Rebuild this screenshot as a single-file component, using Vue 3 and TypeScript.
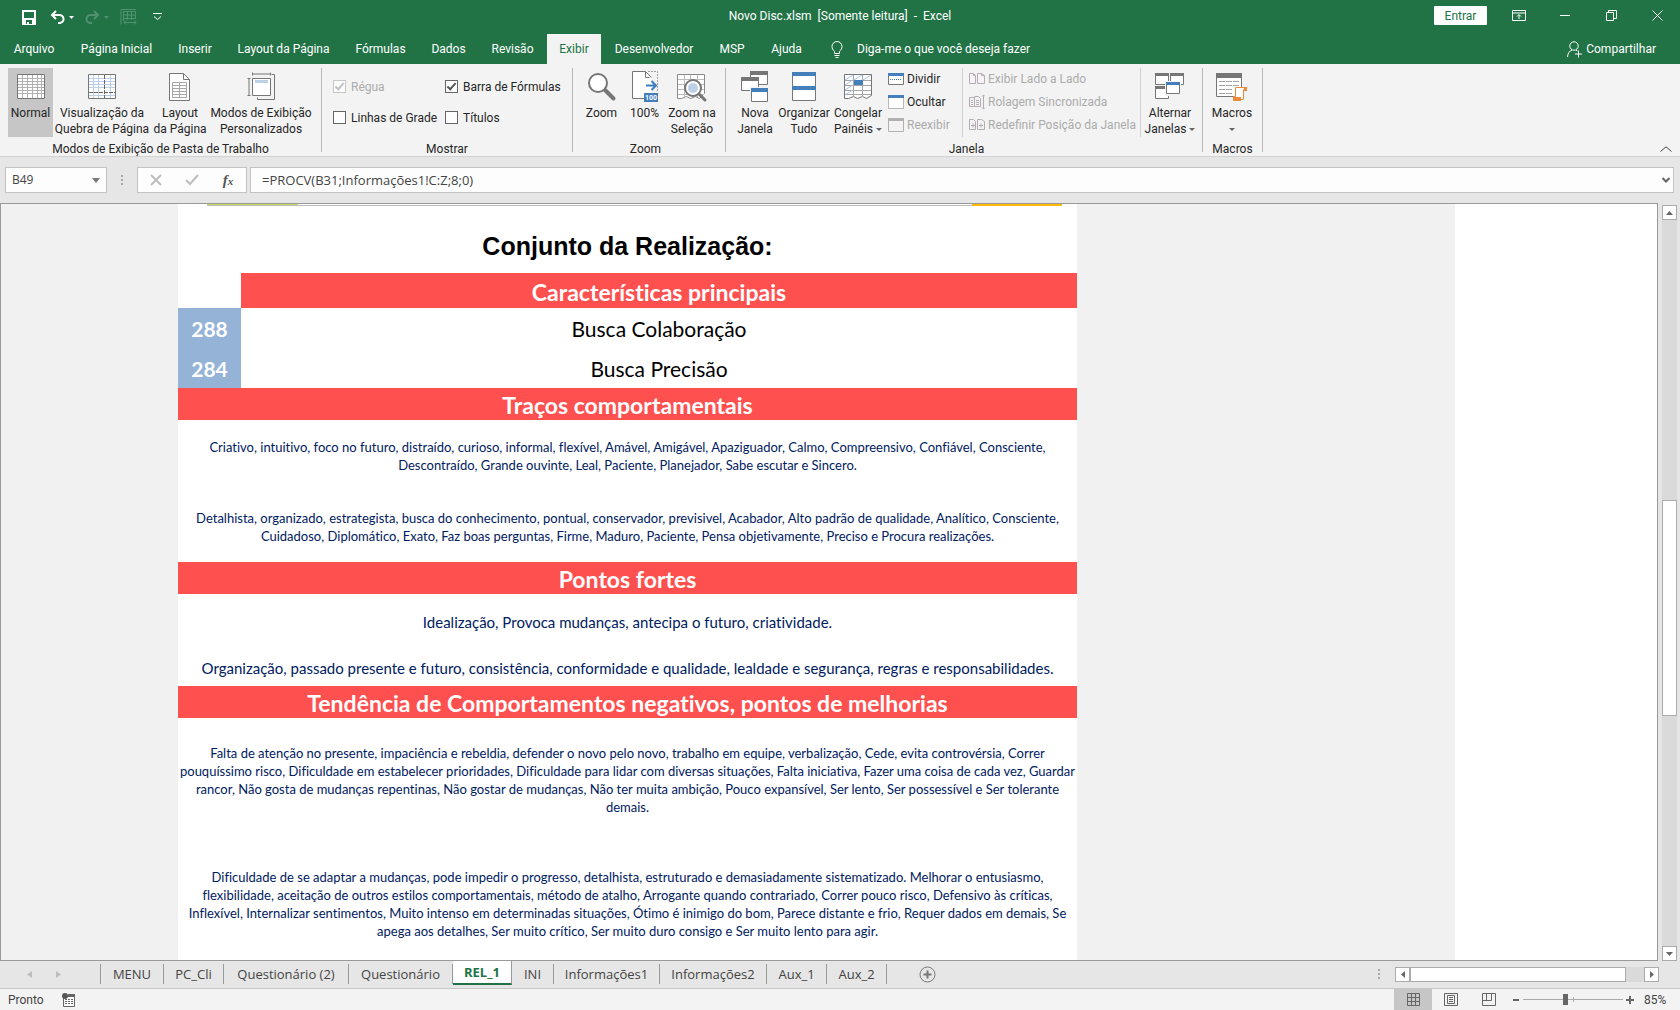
<script setup lang="ts">
import { ref } from 'vue'

interface RibbonTab { label: string; width: number }
interface SheetTab { label: string; width: number }
interface Trait { lines: string[]; size: 'regular' | 'medium'; row: string }

const ribbonTabs: RibbonTab[] = [
  { label: 'Arquivo', width: 68 },
  { label: 'Página Inicial', width: 97 },
  { label: 'Inserir', width: 60 },
  { label: 'Layout da Página', width: 117 },
  { label: 'Fórmulas', width: 77 },
  { label: 'Dados', width: 59 },
  { label: 'Revisão', width: 69 },
  { label: 'Exibir', width: 54 },
  { label: 'Desenvolvedor', width: 106 },
  { label: 'MSP', width: 50 },
  { label: 'Ajuda', width: 59 },
]
const activeTab = ref('Exibir')

const sheetTabs: SheetTab[] = [
  { label: 'MENU', width: 63 },
  { label: 'PC_Cli', width: 60 },
  { label: 'Questionário (2)', width: 125 },
  { label: 'Questionário', width: 104 },
  { label: 'REL_1', width: 59 },
  { label: 'INI', width: 42 },
  { label: 'Informações1', width: 106 },
  { label: 'Informações2', width: 107 },
  { label: 'Aux_1', width: 60 },
  { label: 'Aux_2', width: 60 },
]
const activeSheet = ref('REL_1')

const ruler = ref(true)
const gridLines = ref(false)
const formulaBar = ref(true)
const headings = ref(false)
const cellName = ref('B49')
const formula = ref('=PROCV(B31;Informações1!C:Z;8;0)')
const zoom = ref(42)

const traits: Trait[] = [
  { row: 'h72', size: 'regular', lines: [
    'Criativo, intuitivo, foco no futuro, distraído, curioso, informal, flexível, Amável, Amigável, Apaziguador, Calmo, Compreensivo, Confiável, Consciente,',
    'Descontraído, Grande ouvinte, Leal, Paciente, Planejador, Sabe escutar e Sincero.',
  ] },
  { row: 'h70', size: 'regular', lines: [
    'Detalhista, organizado, estrategista, busca do conhecimento, pontual, conservador, previsivel, Acabador, Alto padrão de qualidade, Analítico, Consciente,',
    'Cuidadoso, Diplomático, Exato, Faz boas perguntas, Firme, Maduro, Paciente, Pensa objetivamente, Preciso e Procura realizações.',
  ] },
]
const strengths: Trait[] = [
  { row: 'h56', size: 'medium', lines: ['Idealização, Provoca mudanças, antecipa o futuro, criatividade.'] },
  { row: 'h36', size: 'medium', lines: ['Organização, passado presente e futuro, consistência, conformidade e qualidade, lealdade e segurança, regras e responsabilidades.'] },
]
const weaknesses: Trait[] = [
  { row: 'h124', size: 'regular', lines: [
    'Falta de atenção no presente, impaciência e rebeldia, defender o novo pelo novo, trabalho em equipe, verbalização, Cede, evita controvérsia, Correr',
    'pouquíssimo risco, Dificuldade em estabelecer prioridades, Dificuldade para lidar com diversas situações, Falta iniciativa, Fazer uma coisa de cada vez, Guardar',
    'rancor, Não gosta de mudanças repentinas, Não gostar de mudanças, Não ter muita ambição, Pouco expansível, Ser lento, Ser possessível e Ser tolerante',
    'demais.',
  ] },
  { row: 'h124', size: 'regular', lines: [
    'Dificuldade de se adaptar a mudanças, pode impedir o progresso, detalhista, estruturado e demasiadamente sistematizado. Melhorar o entusiasmo,',
    'flexibilidade, aceitação de outros estilos comportamentais, método de atalho, Arrogante quando contrariado, Correr pouco risco, Defensivo às críticas,',
    'Inflexível, Internalizar sentimentos, Muito intenso em determinadas situações, Ótimo é inimigo do bom, Parece distante e frio, Requer dados em demais, Se',
    'apega aos detalhes, Ser muito crítico, Ser muito duro consigo e Ser muito lento para agir.',
  ] },
]
const sections = [
  { title: 'Traços comportamentais', rows: traits },
  { title: 'Pontos fortes', rows: strengths },
  { title: 'Tendência de Comportamentos negativos, pontos de melhorias', rows: weaknesses },
]
</script>

<template>
  <div class="app">
    <header class="titlebar">
      <div class="quick">
        <button class="ib save" aria-label="Salvar">
          <svg width="14" height="15" viewBox="0 0 14 15"><path d="M1 1h12v13H1z" fill="none" stroke="#fff" stroke-width="2" /><path d="M1 8h12v6H1z" fill="#fff" /><path d="M4 10h6v4H4z" fill="#217346" /><path d="M5 12h2v2H5z" fill="#fff" /></svg>
        </button>
        <button class="ib undo" aria-label="Desfazer">
          <svg width="15" height="14" viewBox="0 0 15 14"><path d="M6 1L2 5l4 4M2 5h7a4 4 0 0 1 1 8H8" fill="none" stroke="#fff" stroke-width="2" /></svg>
          <svg width="5" height="3" viewBox="0 0 5 3"><path d="M0 0h5L2.500 3z" fill="#fff" /></svg>
        </button>
        <button class="ib redo" aria-label="Refazer">
          <svg width="15" height="14" viewBox="0 0 15 14"><path d="M9 1l4 4-4 4M13 5H6a4 4 0 0 0-1 8h2" fill="none" stroke="#4f9170" stroke-width="2" /></svg>
          <svg width="5" height="3" viewBox="0 0 5 3"><path d="M0 0h5L2.500 3z" fill="#4f9170" /></svg>
        </button>
        <button class="ib resize" aria-label="Ajustar">
          <svg width="17" height="17" viewBox="0 0 17 17" fill="none" stroke="#4f9170"><path d="M1 15.500V.5h15M3.500 12V2.500h12V10M3.500 6h12M3.500 9.500h12M7.500 2.500V11M11.500 2.500V11M4 13.500h12M6 11.500l-2 2 2 2M14 11.500l2 2-2 2" /></svg>
        </button>
        <button class="ib custom" aria-label="Personalizar">
          <svg width="9" height="8" viewBox="0 0 9 8" fill="none" stroke="#fff"><path d="M0 .5h9M1 3.500l3.500 3 3.500-3" /></svg>
        </button>
      </div>
      <div class="doc-title">Novo Disc.xlsm&nbsp; [Somente leitura]&nbsp; -&nbsp; Excel</div>
      <div class="window">
        <button class="signin">Entrar</button>
        <button class="wb" aria-label="Opções da faixa"><svg width="14" height="11" viewBox="0 0 14 11" fill="none" stroke="#fff"><path d="M.5.5h13v10H.5zM.5 3h13M7 9V5M5 6.500L7 4.500l2 2" /></svg></button>
        <button class="wb" aria-label="Minimizar"><svg width="11" height="11" viewBox="0 0 11 11" stroke="#fff"><path d="M0 5.500h10" /></svg></button>
        <button class="wb" aria-label="Restaurar"><svg width="11" height="11" viewBox="0 0 11 11" fill="none" stroke="#fff"><path d="M.5 2.500h7v8h-7zM2.500 2.500v-2h8v8h-3" /></svg></button>
        <button class="wb" aria-label="Fechar"><svg width="11" height="11" viewBox="0 0 11 11" stroke="#fff"><path d="M.5.5l10 10M10.500.5l-10 10" /></svg></button>
      </div>
    </header>

    <nav class="tabs">
      <button
        v-for="t in ribbonTabs"
        :key="t.label"
        class="tab"
        :class="{ on: t.label === activeTab }"
        :style="{ width: t.width + 'px' }"
        @click="activeTab = t.label"
      >{{ t.label }}</button>
      <button class="tell">
        <svg width="12" height="17" viewBox="0 0 12 17" fill="none" stroke="#fff"><path d="M3.500 12.500v-2C2 9 1 7.500 1 5.500a5 5 0 0 1 10 0c0 2-1 3.500-2.500 5v2zM3.500 14.500h5M4.500 16.500h3" /></svg>
        <span>Diga-me o que você deseja fazer</span>
      </button>
      <button class="share">
        <svg width="15" height="17" viewBox="0 0 15 17" fill="none" stroke="#fff"><circle cx="7" cy="5" r="4.200" /><path d="M.5 16c.3-4 2-6 4.500-7M9 9l1.500 1M11.500 9.500v7M8 13h7" /></svg>
        <span>Compartilhar</span>
      </button>
    </nav>

    <section class="ribbon">
      <div class="group g-views">
        <div class="tools">
          <button class="big b45 pressed">
            <svg width="28" height="30" viewBox="0 0 28 30"><path d="M0 2h28v25H0z" fill="#fff" /><path d="M1 6.500h26M1 9.500h26M1 12.500h26M1 15.500h26M1 18.500h26M1 21.500h26M5.500 3v23M10.500 3v23M15.500 3v23M20.500 3v23M24.500 3v23" stroke="#b1b1b1" /><path d="M.5 2.500h27v24H.5z" fill="none" stroke="#767676" /></svg>
            <span>Normal</span>
          </button>
          <button class="big b98">
            <svg width="28" height="30" viewBox="0 0 28 30"><path d="M0 2h28v25H0z" fill="#fff" /><path d="M1 6.500h26M1 9.500h26M1 12.500h26M1 15.500h26M1 23.500h26M5.500 3v23M10.500 3v23M22.500 3v23" stroke="#bcd0e8" /><path d="M16.500 3v23M1 20.500h26" stroke="#666" stroke-dasharray="4 1" /><path d="M.5 2.500h27v24H.5z" fill="none" stroke="#767676" /></svg>
            <span>Visualização da<br>Quebra de Página</span>
          </button>
          <button class="big b58">
            <svg width="22" height="30" viewBox="0 0 22 30"><path d="M.5 1.500h14l6 6v21H.5z" fill="#fff" stroke="#767676" /><path d="M14.500 1.500v6h6" fill="none" stroke="#767676" /><path d="M3.500 10.500h14v15h-14zM3.500 13.500h14M3.500 16.500h14M3.500 19.500h14M3.500 22.500h14M10.500 10.500v15" fill="none" stroke="#a6a6a6" /></svg>
            <span>Layout<br>da Página</span>
          </button>
          <button class="big b104">
            <svg width="28" height="30" viewBox="0 0 28 30" fill="none" stroke="#767676"><path d="M5.500 6.500h18v17h-18z" fill="#fff" stroke-width="1" /><path d="M8 8h13v3H8z" fill="#bcd0e8" stroke="none" /><path d="M5.500.5v3M23.500.5v3M5.500 2h18M.5 6.500h3M.5 23.500h3M2 6.500v17M24.500 2.500h3v25h-17v-2" /></svg>
            <span>Modos de Exibição<br>Personalizados</span>
          </button>
        </div>
        <div class="group-label">Modos de Exibição de Pasta de Trabalho</div>
      </div>

      <div class="group g-show">
        <div class="checks">
          <label class="check off"><input v-model="ruler" type="checkbox" disabled>Régua</label>
          <label class="check"><input v-model="formulaBar" type="checkbox">Barra de Fórmulas</label>
          <label class="check"><input v-model="gridLines" type="checkbox">Linhas de Grade</label>
          <label class="check"><input v-model="headings" type="checkbox">Títulos</label>
        </div>
        <div class="group-label">Mostrar</div>
      </div>

      <div class="group g-zoom">
        <div class="tools">
          <button class="big b43">
            <svg width="28" height="30" viewBox="0 0 28 30"><path d="M16.500 17.500l9 9" stroke="#767676" stroke-width="4" stroke-linecap="round" /><circle cx="10" cy="11" r="9" fill="#fff" stroke="#767676" stroke-width="2" /></svg>
            <span>Zoom</span>
          </button>
          <button class="big b43">
            <svg width="28" height="32" viewBox="0 0 28 32"><path d="M1.500 27.500V.5h13l6 6v21z" fill="#fff" /><path d="M13 27.500H1.500V.5h13l6 6M14.500.5v6h4" fill="none" stroke="#767676" /><path d="M17 .5h9.500V21" fill="none" stroke="#a0a0a0" stroke-dasharray="2 1" /><path d="M15 14.500h9M20.500 10l4.500 4.500-4.500 4.500" fill="none" stroke="#3e7dc0" stroke-width="2" /><path d="M13 22h14v9H13z" fill="#457fbb" /><text x="20" y="29" font-size="7" font-weight="700" text-anchor="middle" fill="#fff">100</text></svg>
            <span>100%</span>
          </button>
          <button class="big b52">
            <svg width="30" height="30" viewBox="0 0 30 30"><path d="M.5 2.500h27v19l-5 5-4-2-5 2-4-2-5 2h-4z" fill="#fff" stroke="#8a8a8a" /><path d="M1 7.500h26M1 12.500h26M1 17.500h26M1 22.500h26M7.500 3v22M13.500 3v4M20.500 3v22" stroke="#bcbcbc" /><circle cx="16" cy="16" r="8" fill="#fff" stroke="#767676" stroke-width="2" /><circle cx="16" cy="16" r="5" fill="#bcd0e8" /><path d="M22 22l6 6" stroke="#767676" stroke-width="3" stroke-linecap="round" /></svg>
            <span>Zoom na<br>Seleção</span>
          </button>
        </div>
        <div class="group-label">Zoom</div>
      </div>

      <div class="group g-window">
        <div class="tools">
          <button class="big b48">
            <svg width="28" height="32" viewBox="0 0 28 32" fill="#fff"><path d="M9.500.5h17v13h-17z" stroke="#767676" /><path d="M9 0h18v4H9z" fill="#767676" /><path d="M.5 6.500h17v13H.5z" stroke="#767676" /><path d="M0 6h18v4H0z" fill="#767676" /><path d="M9 16h19v15H9z" fill="#f3f3f3" /><path d="M10.500 17.500h16v13h-16z" stroke="#767676" /><path d="M10 17h17v4H10z" fill="#457fbb" /></svg>
            <span>Nova<br>Janela</span>
          </button>
          <button class="big b50">
            <svg width="24" height="30" viewBox="0 0 24 30" fill="#fff"><path d="M.5.5h23v28H.5z" stroke="#767676" /><path d="M0 0h24v4H0zM0 14h24v4H0z" fill="#457fbb" /></svg>
            <span>Organizar<br>Tudo</span>
          </button>
          <button class="big b58">
            <svg width="28" height="30" viewBox="0 0 28 30"><path d="M.5 2.500h27v21l-5 3-4-2-5 2-4-2-5 2h-4z" fill="#fff" stroke="#767676" /><path d="M1 8.500h26M1 13.500h26M1 18.500h26M1 22.500h26M9.500 3v22M18.500 3v22" stroke="#a6a6a6" /><path d="M1 8l8-5M10 8l8-5M19 8l8-5M1 13l8-5M1 18l8-5M1 23l8-5" stroke="#a9c4e4" /><path d="M10 8h9v5h-9z" fill="#457fbb" /></svg>
            <span>Congelar<br>Painéis <i class="caret" /></span>
          </button>
        </div>
        <div class="smalls s1">
          <button class="small"><svg width="16" height="14" viewBox="0 0 16 14"><path d="M.5 1.500h15v11H.5z" fill="#fff" stroke="#767676" /><path d="M0 1h16v3H0z" fill="#457fbb" /><path d="M2 7.500h12" stroke="#457fbb" stroke-dasharray="1 1" /></svg>Dividir</button>
          <button class="small"><svg width="16" height="14" viewBox="0 0 16 14"><path d="M.5 1.500h15v12H.5z" fill="#fff" stroke="#767676" stroke-dasharray="1 1" /><path d="M0 0h16v3H0z" fill="#457fbb" /></svg>Ocultar</button>
          <button class="small" disabled><svg width="16" height="14" viewBox="0 0 16 14"><path d="M.5.5h15v13H.5z" fill="#f3f3f3" stroke="#b1b1b1" /><path d="M0 0h16v3H0z" fill="#b1b1b1" /></svg>Reexibir</button>
        </div>
        <div class="smalls s2">
          <button class="small" disabled><svg width="16" height="14" viewBox="0 0 16 14" fill="#f8f3f8" stroke="#b5abb5"><path d="M.5 1.500h4l2 2v8h-6zM8.500 1.500h4l3 2v8h-7zM4.500 1.500v2h2M12.500 1.500v2h3" /></svg>Exibir Lado a Lado</button>
          <button class="small" disabled><svg width="16" height="16" viewBox="0 0 16 16" fill="none" stroke="#b5abb5"><path d="M5 3.500H.5v9H5M5.500 2.500h4l2 2v8h-6zM7 6.500h3M7 8.500h3M7 10.500h3M2 6.500h2M2 8.500h2M2 10.500h2M14.500 1v14M13 2.500L14.500 1 16 2.500M13 13.500l1.500 1.500 1.500-1.500" /></svg>Rolagem Sincronizada</button>
          <button class="small" disabled><svg width="16" height="14" viewBox="0 0 16 14" fill="none" stroke="#b5abb5"><path d="M.5 1.500h4l2 2v8h-6zM8.500 1.500h4l3 2v8h-7zM2 7.500h4M4 5.500v4M10 7.500h4M12 5.500v4" /></svg>Redefinir Posição da Janela</button>
        </div>
        <div class="tools switch">
          <button class="big b58">
            <svg width="30" height="30" viewBox="0 0 30 30" fill="#fff"><path d="M.5 1.500h13v11H.5z" stroke="#767676" /><path d="M15.500 1.500h13v11h-13z" stroke="#767676" /><path d="M.5 15.500h13v11H.5z" stroke="#767676" /><path d="M0 1h14v3H0zM15 1h14v3H15zM0 14h14v3H0z" fill="#767676" /><path d="M10 9h16v15H10z" fill="#f3f3f3" /><path d="M11.500 10.500h13v11h-13z" stroke="#767676" /><path d="M11 10h14v3H11z" fill="#457fbb" /></svg>
            <span>Alternar<br>Janelas <i class="caret" /></span>
          </button>
        </div>
        <div class="group-label">Janela</div>
      </div>

      <div class="group g-macros">
        <div class="tools">
          <button class="big b58">
            <svg width="32" height="30" viewBox="0 0 32 30"><path d="M.5 1.500h25v23H.5z" fill="#fff" stroke="#767676" /><path d="M0 1h26v5H0z" fill="#767676" /><path d="M3 9.500h20M3 13.500h20M3 17.500h14M3 21.500h14" stroke="#a6a6a6" stroke-dasharray="6 1" /><path d="M19.500 15.500h10v2h-2v10h-10v-3h2z" fill="#fff" stroke="#e88d3d" stroke-width="1" /><path d="M17 25h8v4h-8zM28 15h3v4h-3z" fill="#e88d3d" /></svg>
            <span>Macros<br><i class="caret" /></span>
          </button>
        </div>
        <div class="group-label">Macros</div>
      </div>
      <button class="collapse" aria-label="Recolher faixa"><svg width="12" height="6" viewBox="0 0 12 6" fill="none" stroke="#444"><path d="M.5 5.500L6 .8l5.500 4.700" /></svg></button>
    </section>

    <section class="formula-bar">
      <div class="box name-box">
        <input v-model="cellName" aria-label="Caixa de nome">
        <button aria-label="Abrir nomes"><svg width="8" height="5" viewBox="0 0 8 5"><path d="M0 0h8L4 5z" fill="#777" /></svg></button>
      </div>
      <span class="grip" />
      <div class="box fx-box">
        <button aria-label="Cancelar"><svg width="12" height="12" viewBox="0 0 12 12" stroke="#bdbdbd" stroke-width="2"><path d="M1 1l10 10M11 1L1 11" /></svg></button>
        <button aria-label="Inserir"><svg width="14" height="12" viewBox="0 0 14 12" fill="none" stroke="#bdbdbd" stroke-width="2"><path d="M1 6l4 4 8-9" /></svg></button>
        <button class="fx" aria-label="Inserir função">f<small>x</small></button>
      </div>
      <div class="box formula-box">
        <input v-model="formula" aria-label="Fórmula">
        <button aria-label="Expandir"><svg width="8" height="6" viewBox="0 0 8 6" fill="none" stroke="#666" stroke-width="2"><path d="M.5 1L4 4.500 7.500 1" /></svg></button>
      </div>
    </section>

    <main class="work">
      <div class="sheet">
        <div class="outside" />
        <div class="page">
          <div class="chart-edge"><i class="lime" /><i class="amber" /></div>
          <h1>Conjunto da Realização:</h1>
          <table>
            <colgroup><col class="c-score"><col></colgroup>
            <tbody>
              <tr class="h35"><td /><th class="band">Características principais</th></tr>
              <tr class="h40"><td class="score">288</td><td class="profile">Busca Colaboração</td></tr>
              <tr class="h40"><td class="score">284</td><td class="profile">Busca Precisão</td></tr>
              <template v-for="s in sections" :key="s.title">
                <tr class="h32"><th class="band" colspan="2">{{ s.title }}</th></tr>
                <tr v-for="(r, i) in s.rows" :key="i" :class="r.row">
                  <td class="trait" :class="r.size" colspan="2">
                    <span v-for="line in r.lines" :key="line">{{ line }}</span>
                  </td>
                </tr>
              </template>
            </tbody>
          </table>
        </div>
        <div class="outside" />
      </div>
      <div class="vscroll">
        <button aria-label="Rolar para cima"><svg width="7" height="4" viewBox="0 0 7 4"><path d="M0 4h7L3.500 0z" fill="#666" /></svg></button>
        <div class="vtrack"><div class="vthumb" /></div>
        <button aria-label="Rolar para baixo"><svg width="7" height="4" viewBox="0 0 7 4"><path d="M0 0h7L3.500 4z" fill="#666" /></svg></button>
      </div>
    </main>

    <nav class="sheet-tabs">
      <div class="arrows">
        <button aria-label="Anterior"><svg width="5" height="7" viewBox="0 0 5 7"><path d="M5 0v7L0 3.500z" fill="#bdbdbd" /></svg></button>
        <button aria-label="Próxima"><svg width="5" height="7" viewBox="0 0 5 7"><path d="M0 0v7l5-3.500z" fill="#bdbdbd" /></svg></button>
      </div>
      <button
        v-for="t in sheetTabs"
        :key="t.label"
        class="stab"
        :class="{ on: t.label === activeSheet }"
        :style="{ width: t.width + 'px' }"
        @click="activeSheet = t.label"
      >{{ t.label }}</button>
      <button class="add" aria-label="Nova planilha"><svg width="17" height="17" viewBox="0 0 17 17" fill="none" stroke="#777"><circle cx="8.500" cy="8.500" r="7.500" /><path d="M8.500 4.500v8M4.500 8.500h8" stroke-width="2" /></svg></button>
      <span class="grip tab-grip" />
      <div class="hscroll">
        <button aria-label="Rolar para a esquerda"><svg width="4" height="7" viewBox="0 0 4 7"><path d="M4 0v7L0 3.500z" fill="#666" /></svg></button>
        <div class="htrack"><div class="hthumb" /></div>
        <button aria-label="Rolar para a direita"><svg width="4" height="7" viewBox="0 0 4 7"><path d="M0 0v7l4-3.500z" fill="#666" /></svg></button>
      </div>
    </nav>

    <footer class="status">
      <span class="ready">Pronto</span>
      <button class="rec" aria-label="Gravar macro"><svg width="13" height="14" viewBox="0 0 13 14"><path d="M1.500 4v9.500h11V2.500H6" fill="#fff" stroke="#666" /><path d="M6 1h7v3H6z" fill="#666" /><path d="M3 6.500h8M3 8.500h8M3 10.500h8" stroke="#666" stroke-dasharray="2 1" /><circle cx="3" cy="3" r="3" fill="#555" /></svg></button>
      <div class="views">
        <button class="view on" aria-label="Normal"><svg width="13" height="13" viewBox="0 0 13 13" fill="none" stroke="#666"><path d="M.5.5h12v12H.5zM.5 4.500h12M.5 8.500h12M4.500.5v12M8.500.5v12" /></svg></button>
        <button class="view" aria-label="Layout da página"><svg width="14" height="13" viewBox="0 0 14 13" fill="none" stroke="#666"><path d="M.5.5h13v12H.5zM3.500 2.500h7v8h-7zM5 4.500h4M5 6.500h4M5 8.500h4" /></svg></button>
        <button class="view" aria-label="Quebra de página"><svg width="14" height="13" viewBox="0 0 14 13" fill="none" stroke="#666"><path d="M.5.5h13v12H.5zM.5 7.500h9v-7M4.500.5v7" /></svg></button>
      </div>
      <button class="zb" aria-label="Menos zoom"><svg width="8" height="8" viewBox="0 0 8 8"><path d="M1 4h6" stroke="#666" stroke-width="2" /></svg></button>
      <input v-model="zoom" class="zoom" type="range" min="0" max="100" aria-label="Zoom">
      <button class="zb" aria-label="Mais zoom"><svg width="8" height="8" viewBox="0 0 8 8"><path d="M0 4h8M4 0v8" stroke="#666" stroke-width="2" /></svg></button>
      <span class="pct">85%</span>
    </footer>
  </div>
</template>

<style>
body { margin: 0; }
</style>

<style scoped>
.app {
  height: 100vh;
  display: flex;
  flex-direction: column;
  overflow: hidden;
  font: 12px/16px Roboto, "Open Sans", sans-serif;
  color: #262626;
  background: #e6e6e6;
}
.app *, .app *::before { box-sizing: border-box; }
button, input { font: inherit; color: inherit; margin: 0; padding: 0; border: 0; background: none; }
button { white-space: nowrap; }
input { outline: 0; min-width: 0; }
svg { display: block; flex: none; }

.titlebar {
  flex: none;
  height: 34px;
  display: grid;
  grid-template-columns: 1fr auto 1fr;
  align-items: center;
  background: #217346;
  color: #fff;
}
.quick { display: flex; align-items: center; padding-left: 22px; }
.ib { display: flex; align-items: center; gap: 4px; }
.save { margin-right: 14px; }
.undo { margin-right: 11px; }
.redo { margin-right: 11px; }
.resize { margin-right: 16px; }
.doc-title { padding-bottom: 2px; white-space: nowrap; }
.window { display: flex; justify-content: flex-end; align-items: center; padding-bottom: 3px; }
.signin { width: 53px; height: 19px; margin-right: 9px; background: #fff; color: #217346; border-radius: 1px; }
.wb { width: 46px; height: 20px; display: flex; align-items: center; justify-content: center; }

.tabs { flex: none; height: 30px; display: flex; background: #217346; color: #fff; }
.tab { flex: none; text-align: center; }
.tab.on { background: #f3f3f3; color: #217346; }
.tell { display: flex; align-items: center; gap: 14px; margin-left: 15px; }
.share { display: flex; align-items: center; gap: 4px; margin-left: auto; padding-right: 24px; }

.ribbon {
  flex: none;
  height: 93px;
  display: flex;
  background: #f3f3f3;
  border-bottom: 1px solid #d2d2d2;
}
.group {
  flex: none;
  margin: 4px 0;
  display: grid;
  grid-template-rows: 69px 16px;
  border-right: 1px solid #b8b8b8;
}
.group-label { grid-column: 1 / -1; text-align: center; line-height: 16px; padding-top: 4px; }
.tools { display: flex; }
.g-views { width: 322px; padding-left: 8px; }
.g-views .group-label { padding-right: 8px; }
.g-show { width: 251px; }
.g-zoom { width: 153px; padding-left: 7px; }
.g-zoom .group-label { padding-right: 14px; }
.g-window { width: 477px; padding-left: 5px; grid-template-columns: 157px 74px 179px 1fr; }
.g-macros { width: 60px; }
.big {
  flex: none;
  height: 69px;
  display: flex;
  flex-direction: column;
  align-items: center;
}
.big > svg { margin-top: 3px; height: 32px; overflow: visible; }
.big > span { margin-top: 2px; text-align: center; white-space: nowrap; }
.pressed { background: #c6c6c6; }
.b43 { width: 43px; }
.b45 { width: 45px; }
.b48 { width: 48px; }
.b50 { width: 50px; }
.b52 { width: 52px; }
.b58 { width: 58px; }
.b98 { width: 98px; }
.b104 { width: 104px; }
.caret {
  display: inline-block;
  border: 3px solid transparent;
  border-top-color: #666;
  border-bottom-width: 0;
  vertical-align: middle;
}
.checks {
  display: grid;
  grid-template-columns: 112px 1fr;
  grid-template-rows: 31px 31px;
  padding: 3px 0 0 11px;
}
.check { display: flex; align-items: center; gap: 5px; white-space: nowrap; }
.check input {
  appearance: none;
  width: 13px;
  height: 13px;
  border: 1px solid #666;
  background: #fdfdfd;
  display: grid;
  place-items: center;
}
.check input:checked::before {
  content: "";
  width: 9px;
  height: 5px;
  border: solid #555;
  border-width: 0 0 2px 2px;
  transform: translateY(-1px) rotate(-48deg);
}
.check.off { color: #ababab; }
.check.off input { border-color: #c6c6c6; }
.check.off input::before { border-color: #c0c0c0; }
.smalls { display: flex; flex-direction: column; height: 69px; }
.small { height: 22px; display: flex; align-items: center; gap: 3px; }
.small + .small { margin-top: 1px; }
.small:disabled { color: #ababab; }
.s2 { border-left: 1px solid #d0d0d0; border-right: 1px solid #d0d0d0; padding-left: 6px; }
.collapse { margin: auto 8px 4px auto; }

.formula-bar {
  flex: none;
  height: 46px;
  display: flex;
  align-items: center;
  padding: 0 6px 0 5px;
  color: #444;
  font-family: "Open Sans", "Noto Sans", sans-serif;
}
.box { height: 26px; display: flex; align-items: center; border: 1px solid #c3c3c3; background: #fdfdfd; }
.name-box { width: 102px; padding: 0 6px; }
.name-box input { flex: 1; }
.grip { width: 2px; height: 10px; background: repeating-linear-gradient(#a8a8a8 0 2px, transparent 2px 4px); }
.formula-bar .grip { margin: 0 14px; }
.fx-box { width: 110px; }
.fx-box button { flex: 1; display: grid; place-items: center; }
.fx-box .fx { display: block; font: italic 700 15px/20px "Liberation Serif", serif; color: #555; }
.fx small { font-size: 11px; }
.formula-box { flex: 1; margin-left: 3px; padding: 0 3px 0 11px; }
.formula-box input { flex: 1; font-size: 13px; }

.work { flex: 1; min-height: 0; display: flex; }
.sheet {
  flex: 1;
  min-width: 0;
  display: grid;
  grid-template-columns: 177px 899px 378px 1fr;
  overflow: hidden;
  border: 1px solid #999;
  background: #fff;
}
.outside { background: #f1f1f1; }
.page { color: #002060; }
.chart-edge {
  height: 2px;
  margin: 0 15px 0 29px;
  display: flex;
  justify-content: space-between;
  border-bottom: 1px solid #bcbcbc;
}
.lime { width: 91px; height: 1px; background: #c5dc5a; }
.amber { width: 90px; height: 2px; background: #ffb900; }
h1 {
  height: 67px;
  margin: 0;
  padding-top: 6px;
  font: 700 25px/68px "Liberation Sans", Arial, sans-serif;
  color: #000;
  text-align: center;
}
table {
  width: 100%;
  table-layout: fixed;
  border-collapse: collapse;
  font-family: Lato, "Open Sans", sans-serif;
  font-variant-ligatures: none;
}
td, th { padding: 0; text-align: center; vertical-align: middle; }
.c-score { width: 63px; }
.band { padding-top: 2px; background: #ff5050; color: #fff; font-size: 23px; line-height: 28px; font-weight: 700; }
.score { padding-top: 2px; background: #95b3d7; color: #fff; font-size: 21px; line-height: 28px; font-weight: 700; }
.profile { padding-top: 2px; color: #000; font-size: 21px; line-height: 28px; }
.trait span { display: block; white-space: nowrap; line-height: 18px; }
.regular { font-size: 13px; }
.medium { font-size: 15px; }
.h32 { height: 32px; }
.h35 { height: 35px; }
.h36 { height: 36px; }
.h40 { height: 40px; }
.h56 { height: 56px; }
.h70 { height: 70px; }
.h72 { height: 72px; }
.h124 { height: 124px; }

.vscroll { flex: none; width: 15px; margin: 2px 3px 0 4px; display: flex; flex-direction: column; background: #dadada; }
.vscroll button, .hscroll button {
  flex: none;
  width: 15px;
  height: 15px;
  display: grid;
  place-items: center;
  border: 1px solid #ababab;
  background: #fff;
}
.vtrack { flex: 1; display: grid; grid-template-rows: 280fr 216fr 230fr; }
.vthumb { grid-row: 2; border: 1px solid #ababab; background: #fff; }

.sheet-tabs {
  flex: none;
  height: 27px;
  display: flex;
  align-items: center;
  padding-bottom: 1px;
  color: #444;
  font: 13px/18px "Open Sans", "Noto Sans", sans-serif;
}
.arrows { width: 101px; padding-left: 27px; display: flex; gap: 24px; border-right: 1px solid #999; height: 20px; align-items: center; }
.stab { flex: none; height: 20px; border-right: 1px solid #999; }
.stab.on {
  align-self: flex-start;
  height: 24px;
  background: #fff;
  color: #217346;
  font-weight: 700;
  border-bottom: 2px solid #217346;
}
.add { margin-left: 32px; }
.tab-grip { margin-left: auto; }
.hscroll { display: flex; width: 264px; height: 15px; margin: 0 21px 0 15px; background: #dadada; }
.htrack { flex: 1; display: grid; grid-template-columns: 216fr 18fr; }
.hthumb { border: 1px solid #ababab; background: #fff; }

.status { flex: none; height: 22px; display: flex; align-items: center; background: #f3f3f3; border-top: 1px solid #c6c6c6; color: #444; }
.ready { padding-left: 8px; width: 62px; }
.views { margin-left: auto; display: flex; height: 21px; }
.view { width: 38px; display: grid; place-items: center; }
.view.on { background: #c6c6c6; }
.zb { margin: 0 3px; }
.views + .zb { margin-left: 4px; }
.zoom {
  appearance: none;
  width: 100px;
  height: 12px;
  background:
    linear-gradient(#ababab, #ababab) 50% 50% / 1px 5px no-repeat,
    linear-gradient(#ababab, #ababab) 0 50% / 100% 1px no-repeat;
}
.zoom::-webkit-slider-thumb { appearance: none; width: 5px; height: 11px; background: #666; border: 0; }
.pct { width: 43px; padding-left: 7px; }
</style>
